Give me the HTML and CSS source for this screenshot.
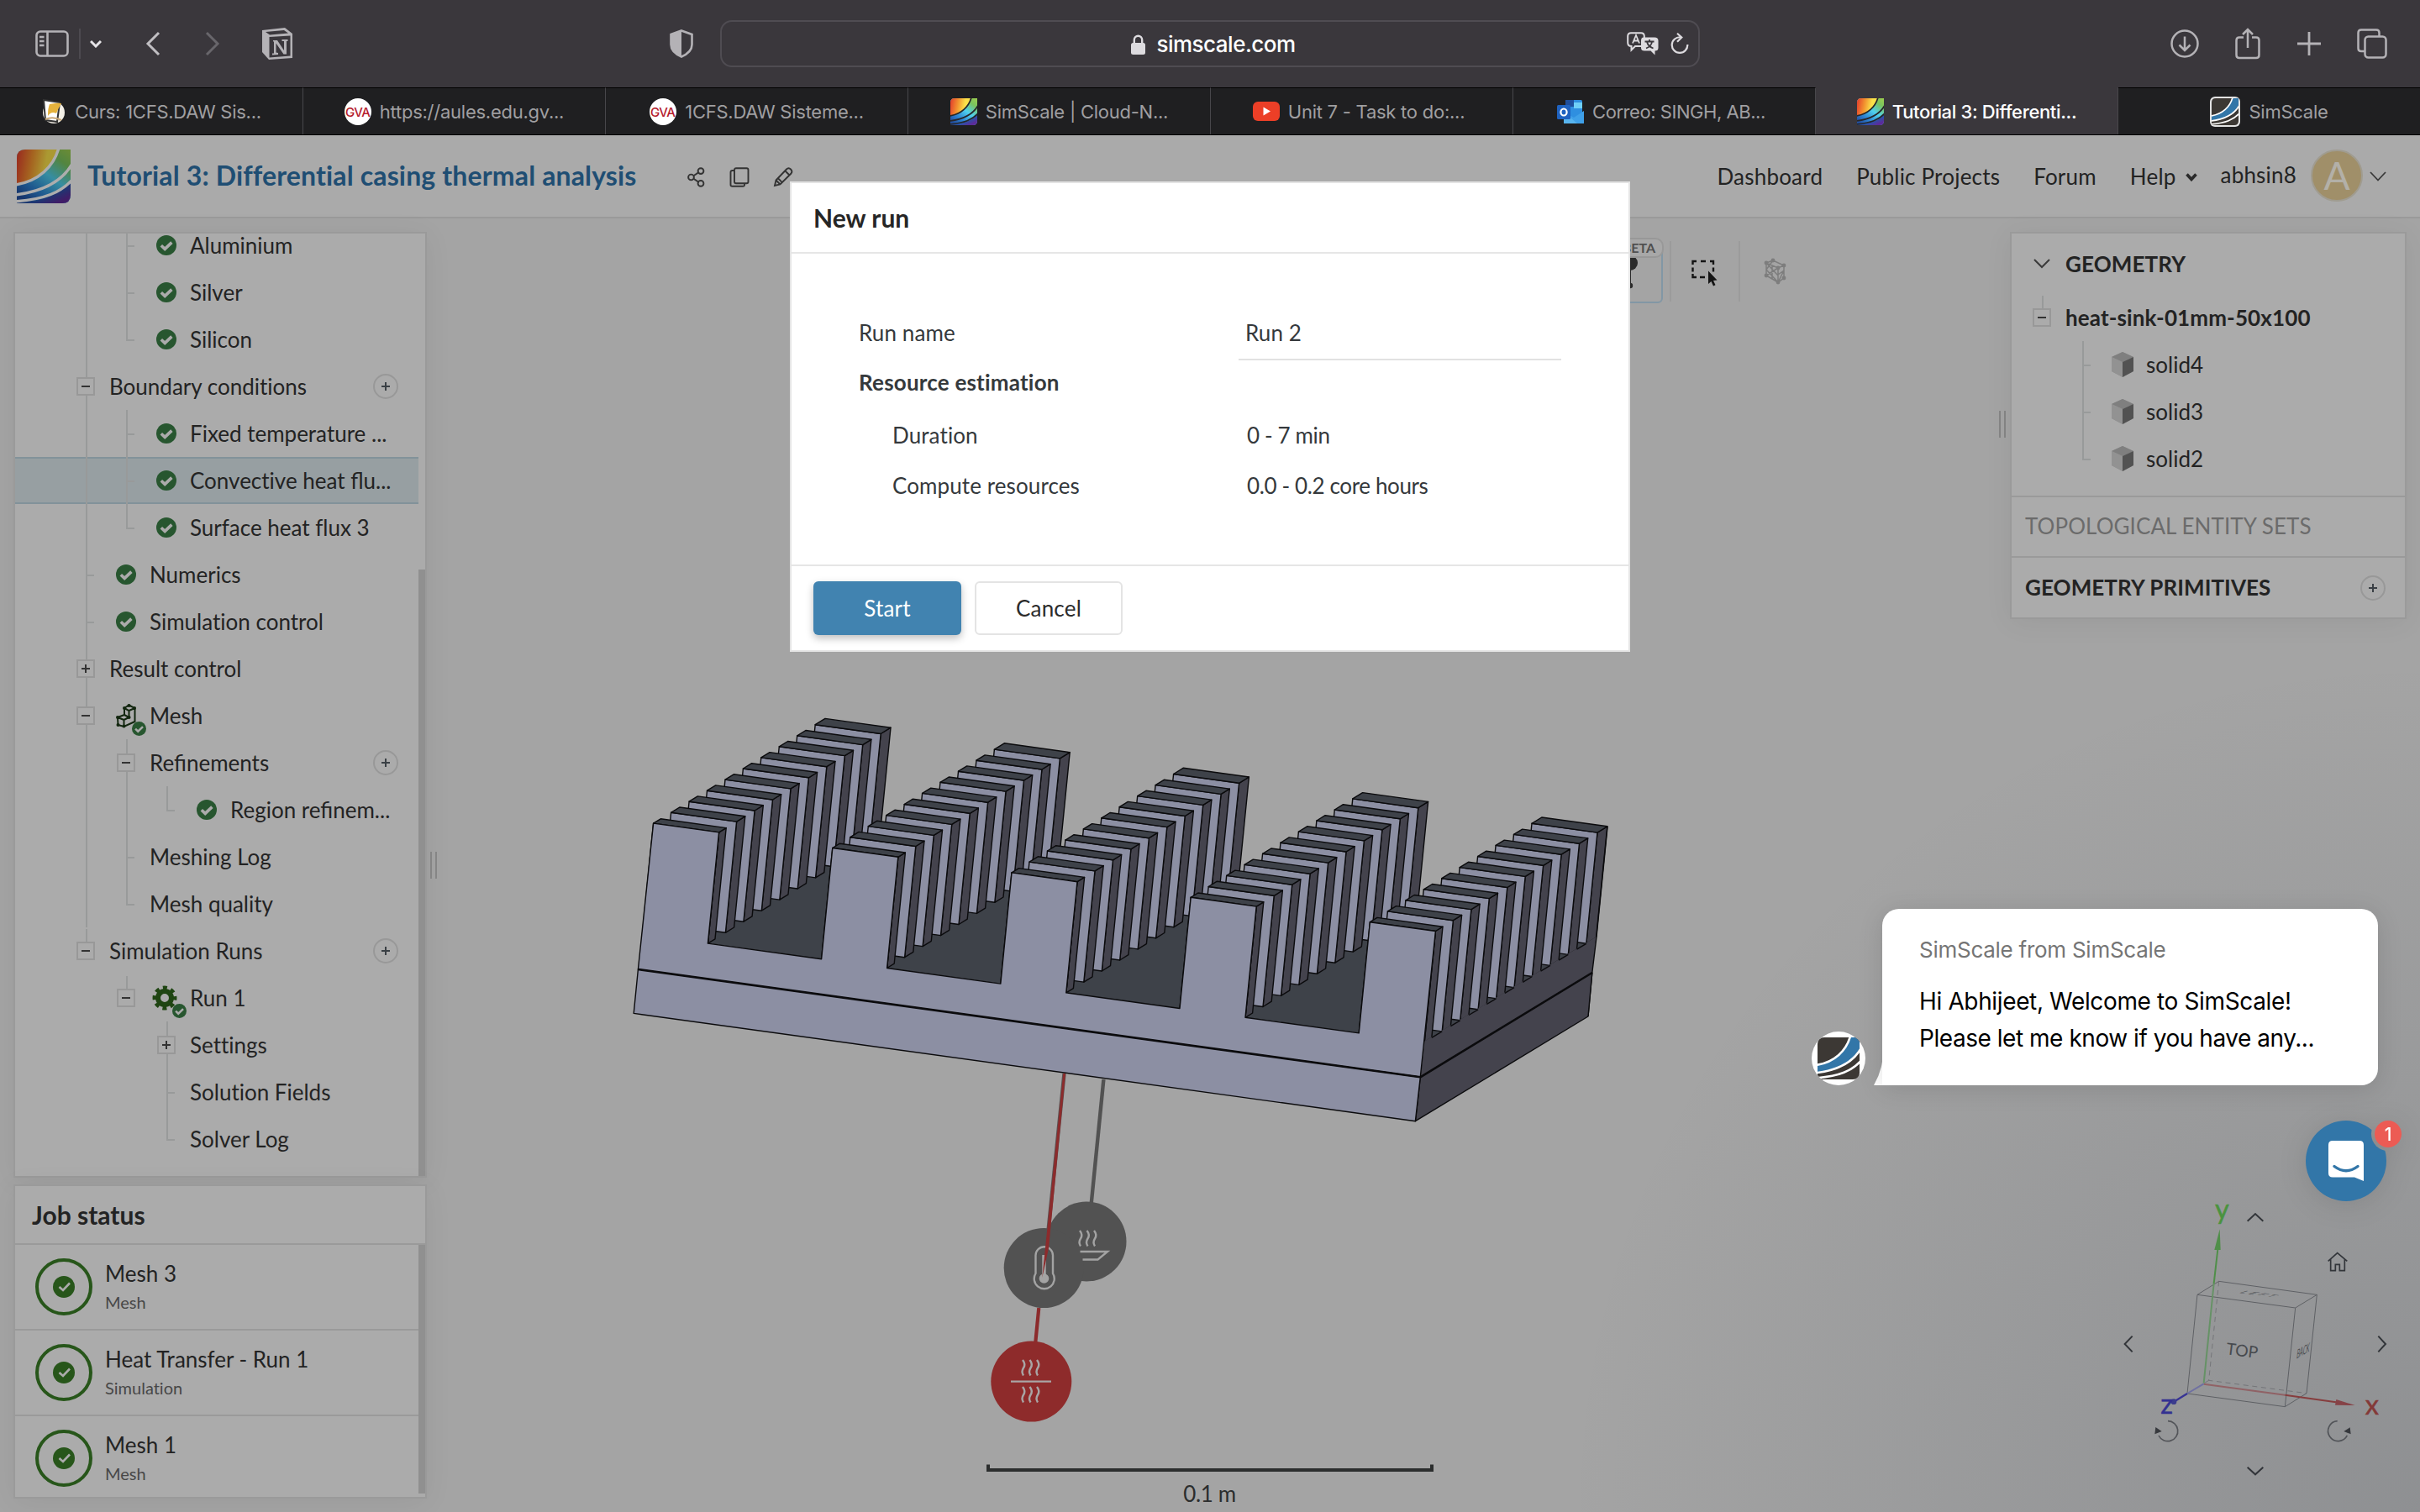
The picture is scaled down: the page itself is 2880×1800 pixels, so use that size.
FILE: index.html
```html
<!DOCTYPE html>
<html lang="en">
<head>
<meta charset="utf-8">
<title>Tutorial 3: Differential casing thermal analysis</title>
<link rel="stylesheet" href="styles.css">
</head>
<body>
<svg class="defs" width="0" height="0">
  <defs>
    <linearGradient id="warm" x1="0" y1="0" x2="1" y2=".15"><stop offset="0" stop-color="#e23a2c"/><stop offset=".4" stop-color="#f2922f"/><stop offset=".75" stop-color="#fbe14a"/></linearGradient>
    <linearGradient id="cool" x1="1" y1="0" x2=".25" y2="1"><stop offset="0" stop-color="#9fce4e"/><stop offset=".22" stop-color="#79c35e"/><stop offset=".5" stop-color="#4fd0ee"/><stop offset=".8" stop-color="#2b7fd0"/><stop offset="1" stop-color="#2350a0"/></linearGradient>
    <linearGradient id="deep" x1="0" y1="0" x2="1" y2="1"><stop offset="0" stop-color="#2b6fc4"/><stop offset=".6" stop-color="#2d4fa8"/><stop offset=".85" stop-color="#5e2a98"/></linearGradient>
    <clipPath id="logo-clip"><path d="M10 0H64V54Q64 64 54 64H0V10Q0 0 10 0Z"/></clipPath>
    <symbol id="logo" viewBox="0 0 64 64">
      <g clip-path="url(#logo-clip)">
        <rect width="64" height="64" fill="url(#cool)"/>
        <path d="M0 0H49C43 20 26 38 0 41Z" fill="url(#warm)"/>
        <path d="M64 38C54 50 36 60 8 64H64Z" fill="url(#deep)"/>
        <g fill="none" stroke="currentColor" stroke-width="3.4"><path d="M50 -2C44 20 26 38 -2 42"/><path d="M66 17C54 38 32 50 -2 54"/><path d="M66 36C52 51 34 59 -2 62"/></g>
      </g>
    </symbol>
    <symbol id="logo-blue" viewBox="0 0 64 64">
      <g clip-path="url(#logo-clip)">
        <rect width="64" height="64" fill="#3c3834"/>
        <path d="M50 -2C44 20 26 38 -2 42V53C32 49 54 38 66 13V-2Z" fill="#3276a8"/>
        <g fill="none" stroke="#fff" stroke-width="3.4"><path d="M50 -2C44 20 26 38 -2 42"/><path d="M66 17C54 38 32 50 -2 54"/><path d="M66 36C52 51 34 59 -2 62"/></g>
      </g>
    </symbol>
    <symbol id="check" viewBox="0 0 24 24"><circle cx="12" cy="12" r="12" fill="#27562f"/><path d="M5.8 12.2 10.2 16.4 18.4 8.6" fill="none" stroke="#ababab" stroke-width="3.6"/></symbol>
    <symbol id="done" viewBox="0 0 68 68"><circle cx="34" cy="34" r="32" fill="none" stroke="#27561a" stroke-width="4"/><circle cx="34" cy="34" r="13" fill="#27561a"/><path d="M28.5 34 33 38 41 29.5" fill="none" stroke="#ababab" stroke-width="2.6"/></symbol>
    <symbol id="cube" viewBox="0 0 28 32"><path d="M14 1 27 7V24L14 31 1 24V7Z" fill="#8d8d8d"/><path d="M14 1 27 7 14 13 1 7Z" fill="#7f7f7f"/><path d="M14 13 27 7V24L14 31Z" fill="#525252"/><path d="M1 7 14 13V31L1 24Z" fill="#929292"/></symbol>
    <symbol id="gva" viewBox="0 0 32 32"><circle cx="16" cy="16" r="16" fill="#fff"/><text x="15.700" y="21.500" text-anchor="middle" class="gva-text">GVA</text></symbol>
  </defs>
</svg>

<div class="window">
  <header class="browser-bar">
    <div class="bar-left">
      <svg width="40" height="32" viewBox="0 0 40 32" fill="none" stroke="#b4b2b6" stroke-width="2.6"><rect x="1.5" y="1.5" width="37" height="29" rx="4.5"/><path d="M14.5 2V30M5 8H10.500M5 13H10.500M5 18H10.500"/></svg>
      <i class="bar-sep"></i>
      <svg class="drop" width="14" height="10" viewBox="0 0 14 10" fill="none" stroke="#e6e4e8" stroke-width="3"><path d="M1 2 7 8 13 2"/></svg>
      <svg class="back" width="18" height="30" viewBox="0 0 18 30" fill="none" stroke="#c0bec2" stroke-width="3"><path d="M16 2 3 15 16 28"/></svg>
      <svg class="fwd" width="18" height="30" viewBox="0 0 18 30" fill="none" stroke="#68666b" stroke-width="3"><path d="M2 2 15 15 2 28"/></svg>
      <svg class="notion" width="38" height="38" viewBox="0 0 38 38"><path d="M1 3 28 0 37 7V36L9 38 1 29Z" fill="#b4b2b6"/><path d="M5 5 27 3 32 6.500 10 8.500Z" fill="#3a373c"/><path d="M9.500 11 34.500 9.500V33.500L9.500 35.500Z" fill="#3a373c"/><path d="M14 15H19L27 27V16H24.500V14H31.500V16H30V31.500H26.500L17.500 18.500V29.500L20 30V32L13 32.500V30.500H15V16.500H14Z" fill="#b4b2b6"/></svg>
    </div>
    <svg class="shield" width="28" height="34" viewBox="0 0 28 34"><path d="M14 1.500 26.500 6V18Q26.500 27 14 32.500 1.500 27 1.500 18V6Z" fill="none" stroke="#b4b2b6" stroke-width="2.600"/><path d="M14 1.500V32.500Q1.500 27 1.500 18V6Z" fill="#b4b2b6"/></svg>
    <div class="url">
      <div class="url-text">
        <svg width="17" height="24" viewBox="0 0 17 24"><rect y="10" width="17" height="14" rx="2.500" fill="#dddbdf"/><path d="M3.800 11V6.500a4.700 4.700 0 0 1 9.400 0V11" fill="none" stroke="#dddbdf" stroke-width="2.400"/></svg>
        <span>simscale.com</span>
      </div>
      <svg class="translate" width="38" height="28" viewBox="0 0 38 28"><path d="M5 1.200H17Q20.800 1.200 20.800 5V14Q20.800 17 17 17H10L5.500 21.500V17Q1.200 17 1.200 13V5Q1.200 1.200 5 1.200Z" fill="none" stroke="#dddbdf" stroke-width="2"/><path d="M7 13.500 11 4 15 13.500M8.300 10.500H13.700" fill="none" stroke="#dddbdf" stroke-width="1.800"/><path d="M20 6.500H33Q37.500 6.500 37.500 10.500V19Q37.500 22.500 33.500 22.500V27.500L28.500 22.500H21Q17 22.500 17 19V10.500Q17 6.500 20 6.500Z" fill="#dddbdf"/><path d="M21.500 11.500H32.500M27 9V11.500M23 19.500Q29.500 17 30 11.500M31.500 19.500Q25 17 24 11.500" fill="none" stroke="#3a373c" stroke-width="1.800"/></svg>
      <svg width="22" height="26" viewBox="0 0 22 26" fill="none" stroke="#dddbdf" stroke-width="2.200"><path d="M12 5.300A9.300 9.300 0 1 0 20.300 14M8 0.800 13.300 5.500 8 10.800"/></svg>
    </div>
    <div class="bar-right">
      <svg width="34" height="34" viewBox="0 0 34 34" fill="none" stroke="#b4b2b6" stroke-width="2.500"><circle cx="17" cy="17" r="15.500"/><path d="M17 8.500V24.500M10.500 18.500 17 25 23.500 18.500"/></svg>
      <svg width="30" height="38" viewBox="0 0 30 38" fill="none" stroke="#b4b2b6" stroke-width="2.500"><path d="M10 11.500H5Q1.500 11.500 1.500 15V32.500Q1.500 36 5 36H25Q28.500 36 28.500 32.500V15Q28.500 11.500 25 11.500H20M15 24V2M9 8 15 2 21 8"/></svg>
      <svg width="28" height="28" viewBox="0 0 28 28" fill="none" stroke="#b4b2b6" stroke-width="2.800"><path d="M14 0V28M0 14H28"/></svg>
      <svg width="36" height="36" viewBox="0 0 36 36" fill="none" stroke="#b4b2b6" stroke-width="2.500"><rect x="9.500" y="9.500" width="25" height="25" rx="4"/><path d="M9 27H5Q1.500 27 1.500 23.500V5Q1.500 1.500 5 1.500H23Q26.500 1.500 26.500 5V9"/></svg>
    </div>
  </header>

  <nav class="tabs">
    <div class="tab"><svg width="28" height="30" viewBox="0 0 28 30"><circle cx="15" cy="16" r="13" fill="#f3efe6"/><path d="M3 1 22 4 19 27 5 25Z" fill="#fff" stroke="#333" stroke-width="2"/><path d="M10 6Q20 4 24 5 21 10 18 17 12 14 8 20 8 10 10 6Z" fill="#e5b23c"/><path d="M5 24Q14 20 24 25" stroke="#c9a878" stroke-width="2" fill="none"/></svg><span>Curs: 1CFS.DAW Sis...</span></div>
    <div class="tab"><svg width="32" height="32"><use href="#gva"/></svg><span>https://aules.edu.gv...</span></div>
    <div class="tab"><svg width="32" height="32"><use href="#gva"/></svg><span>1CFS.DAW Sisteme...</span></div>
    <div class="tab"><svg class="fav" width="32" height="32"><use href="#logo"/></svg><span>SimScale | Cloud-N...</span></div>
    <div class="tab nudge"><svg width="32" height="24" viewBox="0 0 32 24"><rect width="32" height="23" rx="6" fill="#ec3f27"/><path d="M12.500 6.500 21 11.500 12.500 16.500Z" fill="#fff"/></svg><span>Unit 7 - Task to do:...</span></div>
    <div class="tab nudge tight"><svg width="32" height="28" viewBox="0 0 32 28"><rect x="10" width="20" height="24" rx="1.500" fill="#2f8fe0"/><rect x="10" width="10" height="8" fill="#1f4f9c"/><rect x="20" y="3" width="10" height="7" fill="#6fd0f7"/><path d="M8 14 20 21 32 13V28H8Z" fill="#3fa0e8"/><path d="M8 14 24 28H8Z" fill="#58b4ee"/><rect y="6" width="16" height="17" rx="1.500" fill="#1f62c0"/><ellipse cx="8" cy="14.500" rx="3.600" ry="4" fill="none" stroke="#fff" stroke-width="2.200"/></svg><span>Correo: SINGH, AB...</span></div>
    <div class="tab active"><svg class="fav" width="32" height="32"><use href="#logo"/></svg><span>Tutorial 3: Differenti...</span></div>
    <div class="tab"><span class="fav-frame"><svg width="32" height="32"><use href="#logo-blue"/></svg></span><span>SimScale</span></div>
  </nav>

  <header class="app-header">
    <svg class="app-logo" width="64" height="64"><use href="#logo"/></svg>
    <h1>Tutorial 3: Differential casing thermal analysis</h1>
    <div class="title-tools">
      <svg width="22" height="24" viewBox="0 0 22 24"><circle cx="4.500" cy="12" r="3.400"/><circle cx="16" cy="4.600" r="3.400"/><circle cx="16" cy="19.400" r="3.400"/><path d="M7.400 10.200 13.200 6.400M7.400 13.800 13.200 17.600"/></svg>
      <svg width="24" height="24" viewBox="0 0 24 24"><rect x="6" y="1.200" width="16.500" height="18" rx="2"/><path d="M6 4H3.500Q1.500 4 1.500 6V21Q1.500 22.800 3.500 22.800H16Q18 22.800 18 21V19.500"/></svg>
      <svg width="24" height="24" viewBox="0 0 24 24"><path d="M2 22 3.500 15.500 16 2.500Q18.500 0 21 2.500 23.500 5 21.500 7.500L8.500 20.500ZM14.500 4.500 19.500 9.500M3.500 15.500 8.500 20.500M5.800 13.200 Q8 15 10.500 18"/></svg>
    </div>
    <nav class="app-nav">
      <span>Dashboard</span><span>Public Projects</span><span>Forum</span>
      <span class="help">Help <svg width="14" height="10" viewBox="0 0 14 10" fill="none" stroke="#2a2a2a" stroke-width="3.600"><path d="M1.500 1.500 7 7.500 12.500 1.500"/></svg></span>
    </nav>
    <div class="user"><span class="user-name">abhsin8</span><span class="avatar">A</span><svg width="20" height="12" viewBox="0 0 20 12" fill="none" stroke="#3a3a3a" stroke-width="1.800"><path d="M1 1 10 10.500 19 1"/></svg></div>
  </header>

  <main class="viewer">
    <svg id="scene" class="scene" viewBox="0 260 2880 1540" width="2880" height="1540">
      <g id="sink" stroke-linejoin="round"></g>
      <g>
        <path d="M1313.400 1285 1298 1440" stroke="#525252" stroke-width="4.400"/>
        <circle cx="1293" cy="1478" r="47.500" fill="#525252"/>
        <circle cx="1242.200" cy="1509.500" r="47.500" fill="#525252"/>
        <g fill="none" stroke="#a3a3a3" stroke-width="2.400">
          <path d="M1285 1465q4 5 1 9.500t0 9M1293.500 1465q4 5 1 9.500t0 9M1302 1465q4 5 1 9.500t0 9"/>
          <path d="M1285.500 1490H1318L1306.500 1499.500H1288.500"/>
          <path d="M1232.500 1516V1494.500a10 10 0 0 1 20.500 0V1516a12 12 0 1 1-20.500 0Z"/>
          <path d="M1242.500 1494V1518" stroke-width="4.500"/>
        </g>
        <circle cx="1242.500" cy="1522" r="5.800" fill="#a3a3a3"/>
        <path d="M1266.500 1278 1247.500 1465" stroke="#5a5152" stroke-width="4.400"/>
        <path d="M1265.300 1278H1268L1248 1486 1240.300 1521 1242.500 1500Z" fill="#8c2b2c"/>
        <path d="M1236.300 1557 1232.300 1598" stroke="#8c2b2c" stroke-width="4.200"/>
        <circle cx="1227.300" cy="1644.600" r="48" fill="#8e2b2b"/>
        <g fill="none" stroke="#a9a5a5" stroke-width="2.400"><path d="M1217 1619q4 5 1 9.500t0 9M1225.500 1619q4 5 1 9.500t0 9M1234 1619q4 5 1 9.500t0 9"/><path d="M1217 1651q4 5 1 9.500t0 9M1225.500 1651q4 5 1 9.500t0 9M1234 1651q4 5 1 9.500t0 9"/><path d="M1203 1644.600H1251"/></g>
      </g>
      <path d="M1176 1743.500V1750H1704V1743.500" fill="none" stroke="#2b2d2d" stroke-width="4"/>
      <text x="1439.500" y="1788" text-anchor="middle" class="scale-label">0.1 m</text>
      <g transform="translate(2440 1400) scale(.33333)">
        <g fill="none" stroke="#66676a" stroke-width="3">
          <path d="M525 424 602 376 952 424 915 776 838 824 489 777ZM525 424 875 471 952 424M875 471 838 824"/>
          <path d="M602 376 566 730 915 776M566 730 489 777" stroke-dasharray="18 14" opacity=".6"/>
        </g>
        <path d="M548 740 584 384" stroke="#6f9f6c" stroke-width="6"/><path d="M584 384 598 262" stroke="#559a4b" stroke-width="6"/><path d="M605 190 608 264H586Z" fill="#559a4b"/>
        <path d="M548 743 838 782" stroke="#a06a6c" stroke-width="6"/><path d="M838 782 1020 808" stroke="#96403f" stroke-width="6"/><path d="M1088 819 1017 818 1021 798Z" fill="#96474a"/>
        <path d="M548 742 489 777" stroke="#7a7ab0" stroke-width="6"/><path d="M489 777 445 804" stroke="#3a35a0" stroke-width="7"/><circle cx="441" cy="806" r="10" fill="#3f3f98"/>
        <text class="axis" x="588" y="153" fill="#4f9e3f" stroke="#4f9e3f">y</text>
        <text class="axis" x="1124" y="851" fill="#943c38" stroke="#943c38">x</text>
        <text class="axis" x="394" y="849" fill="#36329c" stroke="#36329c">z</text>
        <text class="face" transform="translate(626 637) rotate(7)">TOP</text>
        <text class="face small" transform="matrix(1 .13 -.9 .24 672 417)">LEFT</text>
        <text class="face" transform="matrix(.3 -.17 -.1 .8 878 653)">BACK</text>
        <g fill="none" stroke="#35373a" stroke-width="6"><path d="M704 161 732 135 760 161M704 1040 732 1066 760 1040M293 572 266 600 293 628M1171 572 1197 600 1171 628"/><path d="M992 304 1025 275 1060 304M1001 298V338H1018V316H1033V338H1051V298" stroke-width="5"/></g>
        <g fill="none" stroke="#5a5b5e" stroke-width="5"><path d="M420 875A36 36 0 1 1 387 927M1025 875A36 36 0 1 0 1060 927"/></g>
        <path d="M376 897 398 912 373 922ZM1070 898 1048 912 1073 922Z" fill="#3a3b3e"/>
      </g>
    </svg>

    <aside class="left-col">
      <section class="panel tree-panel">
        <div class="tree">
          <div class="row"><i class="g v"></i><i class="g t"></i><i class="g"><svg width="24" height="24"><use href="#check"/></svg></i><span>Aluminium</span></div>
          <div class="row"><i class="g v"></i><i class="g t"></i><i class="g"><svg width="24" height="24"><use href="#check"/></svg></i><span>Silver</span></div>
          <div class="row"><i class="g v"></i><i class="g l"></i><i class="g"><svg width="24" height="24"><use href="#check"/></svg></i><span>Silicon</span></div>
          <div class="row"><i class="g v"><b class="minus"></b></i><span>Boundary conditions</span><u class="add"></u></div>
          <div class="row"><i class="g v"></i><i class="g t"></i><i class="g"><svg width="24" height="24"><use href="#check"/></svg></i><span>Fixed temperature ...</span></div>
          <div class="row selected"><i class="g v"></i><i class="g t"></i><i class="g"><svg width="24" height="24"><use href="#check"/></svg></i><span>Convective heat <em class="lig">flu...</em></span></div>
          <div class="row"><i class="g v"></i><i class="g l"></i><i class="g"><svg width="24" height="24"><use href="#check"/></svg></i><span class="lig surface">Surface heat flux 3</span></div>
          <div class="row"><i class="g t"></i><i class="g"><svg width="24" height="24"><use href="#check"/></svg></i><span>Numerics</span></div>
          <div class="row"><i class="g t"></i><i class="g"><svg width="24" height="24"><use href="#check"/></svg></i><span>Simulation control</span></div>
          <div class="row"><i class="g v"><b class="plus"></b></i><span>Result control</span></div>
          <div class="row"><i class="g v"><b class="minus"></b></i><i class="g badged"><svg width="26" height="32" viewBox="0 0 26 32"><path d="M3 18 11 15V7L16.500 3.500 23.500 7V23L10.500 29 3.500 27ZM3 18 10.500 21V29M10.500 21 16.500 18 11 15M16.500 18V10L11 7M16.500 10 23.500 7" fill="none" stroke="#12260f" stroke-width="2"/><g fill="#12260f"><circle cx="3" cy="18" r="2"/><circle cx="11" cy="7" r="2"/><circle cx="16.500" cy="4" r="2"/><circle cx="23" cy="7" r="2"/><circle cx="10.500" cy="28.500" r="2"/><circle cx="3.500" cy="27" r="2"/><circle cx="16.500" cy="18" r="2"/></g></svg><svg class="badge" width="17" height="17"><use href="#check"/></svg></i><span>Mesh</span></div>
          <div class="row"><i class="g v"></i><i class="g v"><b class="minus"></b></i><span class="lig">Refinements</span><u class="add"></u></div>
          <div class="row"><i class="g v"></i><i class="g v"></i><i class="g l"></i><i class="g"><svg width="24" height="24"><use href="#check"/></svg></i><span class="lig">Region refinem...</span></div>
          <div class="row"><i class="g v"></i><i class="g t"></i><span>Meshing Log</span></div>
          <div class="row"><i class="g v"></i><i class="g l"></i><span>Mesh quality</span></div>
          <div class="row"><i class="g h"><b class="minus"></b></i><span>Simulation Runs</span><u class="add"></u></div>
          <div class="row"><i class="g"></i><i class="g h"><b class="minus"></b></i><i class="g badged gear"><svg width="30" height="30" viewBox="-15 -15 30 30" fill="none" stroke="#1f4512"><circle r="8" stroke-width="6"/><circle r="12.200" stroke-width="4.500" stroke-dasharray="5 4.580" stroke-dashoffset="2.500"/></svg><svg class="badge" width="17" height="17"><use href="#check"/></svg></i><span>Run 1</span></div>
          <div class="row"><i class="g"></i><i class="g"></i><i class="g v"><b class="plus"></b></i><span>Settings</span></div>
          <div class="row"><i class="g"></i><i class="g"></i><i class="g t"></i><span>Solution Fields</span></div>
          <div class="row"><i class="g"></i><i class="g"></i><i class="g l"></i><span>Solver Log</span></div>
        </div>
        <div class="track"><i class="thumb"></i></div>
      </section>
      <section class="panel job-panel">
        <h2>Job status</h2>
        <div class="jobs">
          <div class="job-list">
            <div class="job"><svg width="68" height="68"><use href="#done"/></svg><p>Mesh 3<small>Mesh</small></p></div>
            <div class="job"><svg width="68" height="68"><use href="#done"/></svg><p>Heat Transfer - Run 1<small>Simulation</small></p></div>
            <div class="job"><svg width="68" height="68"><use href="#done"/></svg><p>Mesh 1<small>Mesh</small></p></div>
          </div>
          <i class="job-thumb"></i>
        </div>
      </section>
    </aside>
    <i class="grip grip-left"></i>

    <div class="center">
      <div class="view-tools">
        <div class="probe"><span class="beta">BETA</span><svg width="24" height="46" viewBox="0 0 24 46"><circle cx="12" cy="11" r="9" fill="#2a2a2a"/><path d="M12 18V36" stroke="#2a2a2a" stroke-width="2"/><circle cx="12" cy="38" r="3.200" fill="#2a2a2a"/></svg></div>
        <i class="tool-sep"></i>
        <svg class="pick" width="32" height="32" viewBox="0 0 32 32"><path d="M1.500 6V2H6M11 2H17M22 2H26V6M26 9.500V14.500M1.500 9.500V14.500M1.500 17V21H6M10 21H16" fill="none" stroke="#141414" stroke-width="2.400"/><path d="M20 13.500V29L23.500 26 26 31.500 28.500 30.300 26 25 30.500 24.500Z" fill="#141414"/></svg>
        <i class="tool-sep"></i>
        <svg class="mesh" width="28" height="32" viewBox="0 0 28 32" fill="none" stroke="#7d7d7d" stroke-width="1.500"><path d="M3 6 11 3 24 9V24L17 29 3 21ZM3 6 17 12 24 9M17 12V29M3 21 17 12M3 6 17 21M10 9V25M3 14 17 29M17 20 24 15M3 14 11 3M17 29 24 15" /><g fill="#7d7d7d" stroke="none"><circle cx="3" cy="6" r="2.400"/><circle cx="11" cy="3" r="2.400"/><circle cx="24" cy="9" r="2.400"/><circle cx="17" cy="12" r="2.400"/><circle cx="24" cy="24" r="2.400"/><circle cx="17" cy="29" r="2.400"/><circle cx="3" cy="21" r="2.400"/></g></svg>
      </div>
    </div>

    <i class="grip grip-right"></i>
    <aside class="panel right-col">
      <div class="geometry">
        <div class="row head"><i class="g"><svg width="20" height="12" viewBox="0 0 20 12" fill="none" stroke="#3a3a3a" stroke-width="2"><path d="M1 1 10 10 19 1"/></svg></i><strong>GEOMETRY</strong></div>
        <div class="row"><i class="g h"><b class="minus"></b></i><strong>heat-sink-01mm-50x100</strong></div>
        <div class="row"><i class="g"></i><i class="g t"></i><i class="g"><svg width="28" height="32"><use href="#cube"/></svg></i><span>solid4</span></div>
        <div class="row"><i class="g"></i><i class="g t"></i><i class="g"><svg width="28" height="32"><use href="#cube"/></svg></i><span>solid3</span></div>
        <div class="row"><i class="g"></i><i class="g l"></i><i class="g"><svg width="28" height="32"><use href="#cube"/></svg></i><span>solid2</span></div>
      </div>
      <div class="bar muted">TOPOLOGICAL ENTITY SETS</div>
      <div class="bar"><strong>GEOMETRY PRIMITIVES</strong><u class="add"></u></div>
    </aside>
  </main>
</div>

<div class="launcher-shade"></div>

<div class="modal" role="dialog">
  <h2>New run</h2>
  <div class="modal-body">
    <div class="field name"><label>Run name</label><span class="input">Run 2</span></div>
    <div class="field"><strong>Resource estimation</strong></div>
    <div class="field sub first"><label>Duration</label><span>0 - 7 min</span></div>
    <div class="field sub"><label>Compute resources</label><span>0.0 - 0.2 core hours</span></div>
  </div>
  <footer><button class="btn primary">Start</button><button class="btn">Cancel</button></footer>
</div>

<div class="chat">
  <span class="chat-avatar"><svg width="50" height="50"><use href="#logo-blue"/></svg></span>
  <svg class="tail" width="12" height="28" viewBox="0 0 12 28"><path d="M12 0V28H0Q8 14 10 0Z" fill="#fff"/></svg>
  <div class="bubble"><p class="from">SimScale from SimScale</p><p>Hi Abhijeet, Welcome to SimScale!</p><p class="tight">Please let me know if you have any...</p></div>
</div>
<svg class="launcher" width="120" height="104" viewBox="0 0 120 104">
  <mask id="notch"><rect width="120" height="104" fill="#fff"/><circle cx="102" cy="20" r="20" fill="#000"/></mask>
  <circle cx="52" cy="52" r="48" fill="#3276a8" mask="url(#notch)"/>
  <path d="M36 28H68Q73 28 73 33V76L62 71.500H36Q31 71.500 31 66.500V33Q31 28 36 28Z" fill="#fff"/>
  <path d="M38 58.500Q52 69 66 58.500" fill="none" stroke="#3276a8" stroke-width="3.400" stroke-linecap="round"/>
  <circle cx="102" cy="20" r="16" fill="#ec5b54"/><text x="102" y="27.500" text-anchor="middle" class="count">1</text>
</svg>
<script src="scene.js"></script>
</body>
</html>
```
FILE: styles.css
```css
* { box-sizing: border-box; }
body { margin: 0; width: 2880px; height: 1800px; overflow: hidden; position: relative; background: #a4a4a4; color: #232323; font: 26px/1.2 Lato, "Liberation Sans", sans-serif; font-variant-ligatures: none; }
h1, h2, p { margin: 0; }
svg { display: block; flex: none; }
em { font-style: normal; }
.lig { font-variant-ligatures: common-ligatures; }
.defs { position: absolute; }
.window { display: grid; grid-template-rows: 104px 57px 99px 1540px; }

/* browser chrome */
.browser-bar { background: #3a373c; display: flex; align-items: center; position: relative; padding-right: 39px; font-family: Inter, "Liberation Sans", sans-serif; }
.bar-left { display: flex; align-items: center; width: 797px; padding-left: 42px; }
.bar-sep { width: 2px; height: 36px; background: #4d4a50; margin: 0 12px 0 12px; }
.back { margin-left: 52px; }
.fwd { margin-left: 53px; }
.notion { margin-left: 49px; }
.drop { margin-left: -1px; }
.url { margin-left: 32px; width: 1166px; height: 56px; border: 2px solid #4f4c52; border-radius: 14px; display: flex; align-items: center; gap: 14px; padding-right: 11px; }
.url-text { flex: 1; display: flex; justify-content: center; align-items: center; gap: 13px; margin-left: 107px; padding-top: 1px; color: #fff; font-size: 26px; font-weight: 500; letter-spacing: -.5px; }
.translate { margin-right: 0; }
.bar-right { margin-left: auto; display: flex; align-items: center; gap: 43.500px; }
.tabs { display: grid; grid-template-columns: 361px repeat(6, 360px) 359px; background: #1f1f21; border-bottom: 1px solid #000; font-family: Inter, "Liberation Sans", sans-serif; font-size: 22px; letter-spacing: -.25px; color: #a09fa1; }
.tab { display: flex; align-items: center; justify-content: center; gap: 10px; border-top: 1px solid #000; border-right: 1.500px solid #48474b; padding-top: 1px; }
.tab:first-child { gap: 12px; }
.tab:last-child { border-right: 0; }
.tab.nudge { padding-right: 7px; }
.tab.tight { letter-spacing: -.45px; }
.tab.active { background: #3a373c; border-top-color: #3a373c; color: #fff; font-weight: 500; letter-spacing: -.34px; }
.fav { color: #26262a; }
.fav-frame { background: #e2e2e2; border-radius: 6px; padding: 2px; }
.gva-text { font: 500 15px Inter, sans-serif; letter-spacing: -.6px; fill: #b5202e; }

/* application header */
.app-header { display: flex; align-items: center; background: #aaa; border-bottom: 2px solid #9a9a9a; padding: 0 40px 0 20px; }
.app-logo { color: #fff; filter: brightness(.68); }
h1 { margin-left: 20px; font-size: 32px; font-weight: 700; letter-spacing: .14px; color: #1f4e73; padding-bottom: 1px; }
.title-tools { display: flex; gap: 28px; margin-left: 60px; fill: none; stroke: #333; stroke-width: 1.900; margin-top: 3px; }
.app-nav { margin-left: auto; display: flex; gap: 40px; letter-spacing: .2px; padding-top: 2px; }
.help { display: flex; align-items: center; gap: 11px; }
.user { display: flex; align-items: center; margin-left: 28px; }
.user-name { margin-bottom: 2px; letter-spacing: .2px; }
.avatar { width: 62px; height: 62px; margin: 0 8px 2px 17px; border-radius: 50%; background: #a08f69; border: 2px solid #a09c90; color: #b3b0a8; font-size: 46px; display: flex; align-items: center; justify-content: center; }

/* workspace */
.viewer { position: relative; display: flex; padding: 16px 16px 16px 16px; background: #a4a4a4; }
.scene { position: absolute; left: 0; top: 0; }
.scale-label { font: 26px Lato, sans-serif; letter-spacing: -.4px; fill: #2b2d2d; }
.axis { font: 98px Lato, sans-serif; stroke-width: 1.500; }
.face { font-family: Lato, sans-serif; font-size: 58px; fill: #4d4f52; }
.face.small { font-size: 40px; letter-spacing: 10px; }
.panel { position: relative; background: #ababab; border: 2px solid #9a9a9a; box-shadow: 0 4px 32px rgba(0, 0, 0, .06); }
.left-col { width: 492px; display: flex; flex-direction: column; gap: 8px; }
.tree-panel { height: 1126px; display: flex; overflow: hidden; }
.tree { flex: 1; margin-top: -14px; }
.track { width: 8px; height: 100%; display: flex; align-items: flex-end; }
.thumb { width: 8px; height: 722px; background: #909090; }
.row { height: 56px; display: flex; align-items: center; padding-left: 60px; white-space: nowrap; line-height: 26px; }
.row > span, .row > strong { margin-left: 4px; }
.row > strong { letter-spacing: .12px; }
.surface { letter-spacing: -.01px; }
.row.selected { background: #979fa2; box-shadow: inset 0 2px #82929a, inset 0 -2px #82929a; }
.g { flex: none; width: 48px; height: 56px; display: flex; align-items: center; justify-content: center; background-repeat: no-repeat; --ln: linear-gradient(#989a9a, #989a9a); }
.v { background-image: var(--ln); background-position: 24px 0; background-size: 2px 56px; }
.h { background-image: var(--ln); background-position: 24px 2px; background-size: 2px 26px; }
.t { background-image: var(--ln), var(--ln); background-position: 24px 0, 24px 28px; background-size: 2px 56px, 10px 2px; }
.l { background-image: var(--ln), var(--ln); background-position: 24px 0, 24px 28px; background-size: 2px 30px, 10px 2px; }
.minus, .plus { width: 22px; height: 22px; border: 2px solid #989898; background: linear-gradient(#333, #333) center / 10px 2px no-repeat #ababab; }
.plus { background: linear-gradient(#333, #333) center / 10px 2px no-repeat, linear-gradient(#333, #333) center / 2px 10px no-repeat #ababab; }
.badged { position: relative; }
.badge { position: absolute; left: 31px; top: 35px; }
.gear { padding-right: 5px; }
.add { margin: 0 24px 0 auto; width: 30px; height: 30px; border: 2px solid #989898; border-radius: 50%; background: linear-gradient(#3a4045, #3a4045) center / 10px 2px no-repeat, linear-gradient(#3a4045, #3a4045) center / 2px 10px no-repeat; }
.job-panel { height: 374px; }
.job-panel h2 { height: 70px; padding-left: 20px; line-height: 68px; font-size: 30px; border-bottom: 2px solid #9a9a9a; }
.jobs { display: flex; }
.job-list { flex: 1; }
.job { height: 102px; display: flex; align-items: center; gap: 15px; padding: 0 0 0 24px; border-bottom: 2px solid #9a9a9a; }
.job:last-child { border-bottom: 0; height: 100px; }
.job p { line-height: 34px; padding-top: 2px; }
.job small { display: block; font-size: 20px; color: #474747; }
.job-thumb { width: 8px; height: 296px; background: #909090; }
.grip { width: 8px; height: 32px; border: solid #858585; border-width: 0 2px; position: relative; }
.grip-left { margin: 738px 0 0 4px; }
.grip-right { margin: 213px 5px 0 0; }
.center { flex: 1; display: flex; justify-content: flex-end; align-items: flex-start; }
.view-tools { display: flex; align-items: center; height: 94px; margin-right: 221px; padding-right: 31px; }
.probe { position: relative; width: 78px; height: 72px; margin-top: 4px; border: 2px solid #8297a5; border-radius: 6px; display: flex; align-items: center; justify-content: center; }
.beta { position: absolute; right: -3px; top: -8px; width: 64px; height: 24px; padding-right: 8px; border: 2px solid #989898; border-radius: 10px; background: #a8a8a8; font: 700 16px/20px Lato, sans-serif; color: #505050; text-align: right; }
.tool-sep { width: 2px; height: 72px; margin: 0 0 0 8px; background: #9b9b9b; }
.pick { margin: 4px 24px 0 24px; }
.mesh { margin-left: 28px; }
.pick + .tool-sep { margin-left: 0; }
.right-col { width: 472px; height: 461px; }
.right-col .row { padding-left: 12px; }
.right-col .row.head { height: 72px; }
.right-col .head .g { height: 72px; }
.geometry { height: 314px; border-bottom: 2px solid #9a9a9a; }
.bar { height: 72px; display: flex; align-items: center; padding: 0 2px 0 16px; letter-spacing: .08px; border-bottom: 2px solid #9a9a9a; }
.bar:last-child { border-bottom: 0; height: 71px; }
.bar .add { margin-right: 21px; }
.muted { color: #6b6b6b; }

/* dialog */
.modal { position: absolute; left: 940px; top: 216px; width: 1000px; height: 560px; background: #fff; border: 2px solid #e4e4e4; color: #35393c; }
.modal h2 { height: 84px; padding-left: 26px; font-size: 30px; line-height: 82px; color: #262626; border-bottom: 2px solid #e6e6e6; }
.modal-body { height: 370px; padding: 61px 80px 0; }
.field { height: 52px; display: grid; grid-template-columns: 452px 1fr; align-items: center; letter-spacing: .1px; padding-top: 2px; }
.field.name { height: 66px; }
.field .input { height: 64px; line-height: 63px; padding-left: 8px; border-bottom: 2px solid #e2e2e2; width: 384px; }
.field strong { letter-spacing: .2px; grid-column: span 2; }
.sub { height: 60px; padding-left: 40px; grid-template-columns: 422px 1fr; }
.sub span { letter-spacing: -.37px; }
.sub.first { margin-top: 7px; }
.modal footer { border-top: 2px solid #e6e6e6; padding: 18px 26px; display: flex; gap: 16px; }
.btn { width: 176px; height: 64px; padding: 0 0 1px; border: 2px solid #e4e4e4; border-radius: 6px; background: #fff; color: #2b2b2b; font: 26px Lato, sans-serif; letter-spacing: .2px; }
.btn.primary { border: 0; background: #4183b0; color: #fff; box-shadow: 0 4px 10px rgba(0, 0, 0, .25); }

/* messenger */
.launcher-shade { position: absolute; right: 0; bottom: 0; width: 1000px; height: 1000px; background: radial-gradient(ellipse at bottom right, rgba(29, 39, 54, .16) 0, rgba(29, 39, 54, 0) 72%); }
.chat { position: absolute; left: 2156px; top: 1082px; display: flex; align-items: flex-end; font: 28px/44px Inter, "Liberation Sans", sans-serif; letter-spacing: -.36px; color: #000; }
.chat-avatar { width: 64px; height: 64px; border-radius: 50%; background: #fff; display: flex; align-items: center; justify-content: center; overflow: hidden; }
.tail { margin-left: 10px; margin-right: -2px; }
.bubble { width: 590px; height: 210px; border-radius: 20px 20px 20px 0; background: #fff; padding: 27px 0 0 44px; box-shadow: 0 4px 30px rgba(0, 0, 0, .12); }
.bubble .from { font-size: 26px; letter-spacing: -.26px; color: #757575; margin-bottom: 17px; }
.bubble .tight { letter-spacing: -.46px; }
.launcher { position: absolute; left: 2740px; top: 1330px; filter: drop-shadow(0 4px 16px rgba(0, 0, 0, .1)); }
.count { font: 500 21px Inter, sans-serif; fill: #fff; }
```
FILE: scene.js
```js
// Heat sink: 5 columns of 10 fins on a two-layer base, drawn back to front.
(function () {
  const FRONT = '#8c8fa3', TOP = '#3e4249', SIDE = '#44434d', LINE = '#0b0b0d';
  const add = (...v) => v.reduce((a, b) => [a[0] + b[0], a[1] + b[1]]);
  const mul = (v, k) => [v[0] * k, v[1] * k];
  const O = [777.6, 980.1], W = [78, 10.8], H = [-13.2, 132.2];
  const COL = [213.2, 29.4], ROW = [21.44, -13.08], DEPTH = [204.7, -124.6];
  const out = [];
  const pts = a => 'M' + a.map(p => p[0].toFixed(1) + ' ' + p[1].toFixed(1)).join('L');
  const fill = (a, c, w) => out.push(`<path d="${pts(a)}Z" fill="${c}" stroke="${LINE}" stroke-width="${w === undefined ? 1.4 : w}"/>`);
  const line = (a, w) => out.push(`<path d="${pts(a)}" fill="none" stroke="${LINE}" stroke-width="${w || 1.4}"/>`);

  const full = add(mul(COL, 4), W);
  const floorFL = add(O, H), floorFR = add(floorFL, full);
  fill([floorFL, floorFR, add(floorFR, DEPTH), add(floorFL, DEPTH)], TOP, 0);

  const depthOf = r => r === 0 ? [8.6, -5.3] : r === 9 ? [11.8, -7.3] : [10.2, -6.3];
  for (let r = 9; r >= 0; r--) {
    const D = depthOf(r);
    for (let c = 0; c < 5; c++) {
      const a = add(O, mul(ROW, r), mul(COL, c), r ? [-.4, .3] : [0, 0]);
      const b = add(a, W);
      fill([b, add(b, D), add(b, D, H), add(b, H)], SIDE);
      fill([a, b, add(b, H), add(a, H)], FRONT);
      fill([a, add(a, D), add(b, D), b], TOP);
    }
  }

  // right flank of the base
  const baseR = [1690.3, 1282.3], baseRB = [1894.8, 1158], lowR = [1684.4, 1334.7], lowRB = [1890, 1210];
  const finR = add(O, full);
  const flankT = [floorFR, add(floorFR, DEPTH)];
  out.push(`<path d="${pts([add(flankT[0], [0, -1.2]), add(flankT[1], [0, -1.2]), baseRB, baseR])}Z" fill="${SIDE}"/>`);
  for (let r = 0; r < 9; r++) {
    const s = add(finR, mul(ROW, r), depthOf(r), H, r ? [-.4, .3] : [0, 0]);
    const e = add(finR, mul(ROW, r + 1), H, [-.4, .3]);
    line([s, e]);
  }
  line([flankT[1], baseRB, lowRB]);
  line([add(finR, DEPTH), flankT[1]]);

  // front face, one outline that follows the five front fins
  const body = [];
  for (let c = 0; c < 5; c++) {
    const a = add(O, mul(COL, c)), b = add(a, W);
    if (c) body.push(add(a, H));
    body.push(a, b);
    if (c < 4) body.push(add(b, H));
  }
  const baseL = [759.4, 1154], lowL = [754.2, 1206.4];
  fill([...body, baseR, baseL], FRONT);
  fill([baseR, baseRB, lowRB, lowR], SIDE);
  fill([baseL, baseR, lowR, lowL], FRONT);
  line([baseL, baseR, baseRB], 2.6);

  document.getElementById('sink').innerHTML = out.join('');
})();
```
